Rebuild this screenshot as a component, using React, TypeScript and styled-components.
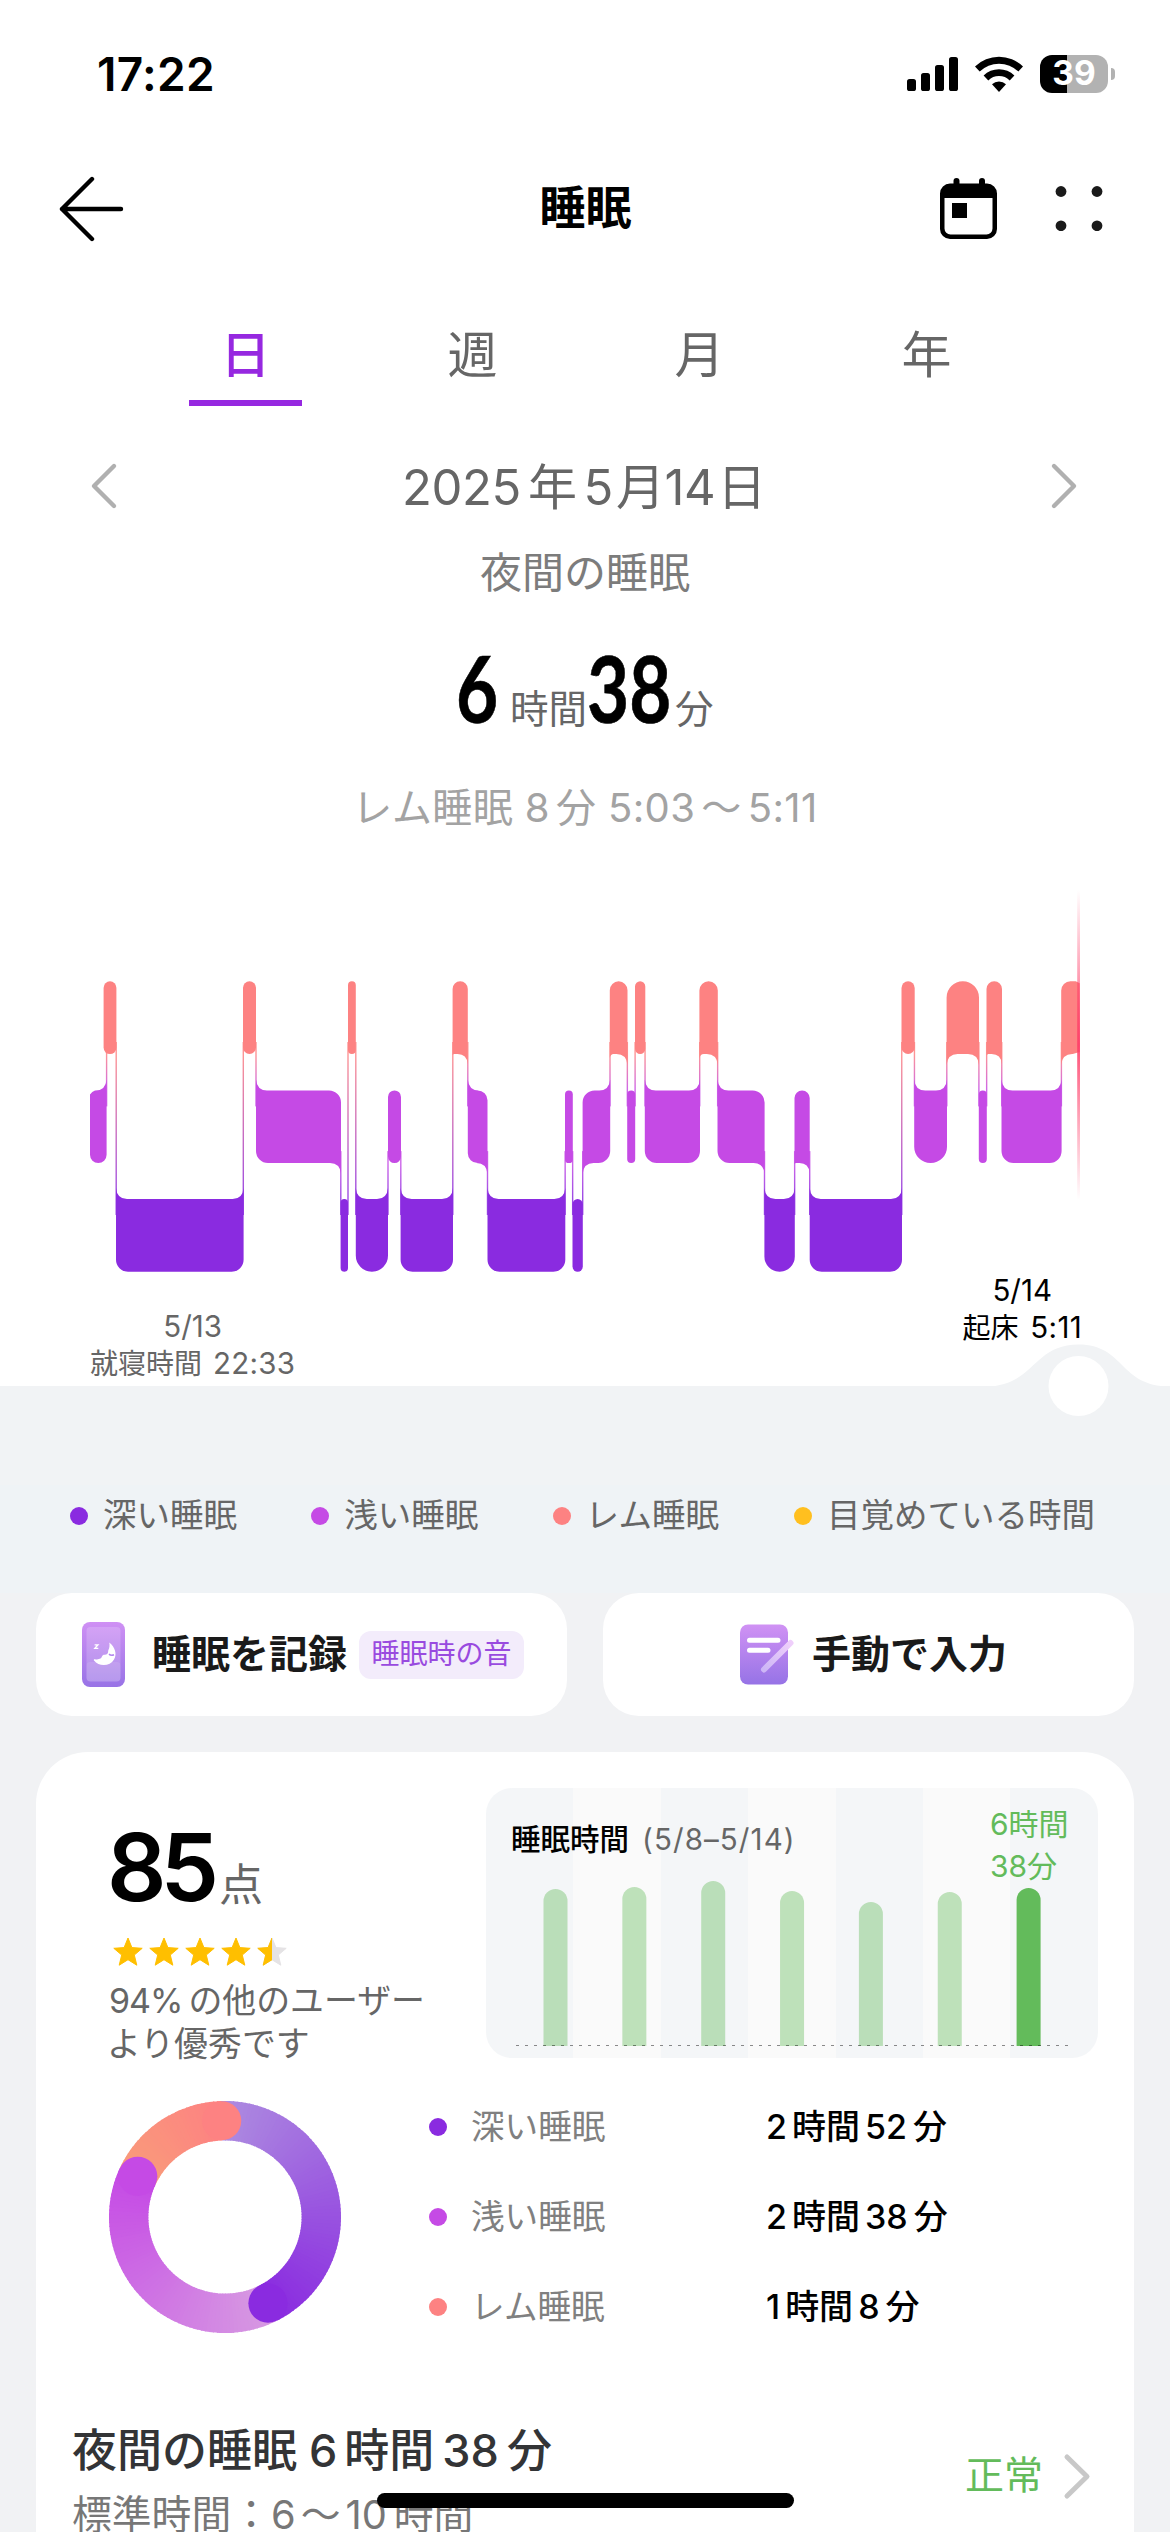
import React from "react";
import styled, { createGlobalStyle } from "styled-components";

const FONT = `Inter, "Noto Sans CJK JP", "Noto Sans", sans-serif`;
const DEEP = "#8a2be0";
const LIGHT = "#c54ae5";
const REM = "#fd8282";
const AWAKE = "#ffbf1f";
const GREEN = "#63bb5b";

const Global = createGlobalStyle`
  *, *::before, *::after { box-sizing: border-box; }
  html, body { margin: 0; padding: 0; background: #f1f2f4; }
  body { font-family: ${FONT}; -webkit-font-smoothing: antialiased; }
  svg { display: block; flex: none; }
`;

const Screen = styled.div`
  position: relative;
  width: 1170px;
  height: 2532px;
  overflow: hidden;
  display: flex;
  flex-direction: column;
  background: #f1f2f4;
`;

const Top = styled.section`
  height: 1386px;
  flex: none;
  display: flex;
  flex-direction: column;
  background: #fff;
`;

/* A line of text with an exact box height; letter-spacing tunes its width. */
const Text = styled.span<{ $size: number; $color?: string; $weight?: number; $line?: number; $track?: number; $ml?: number }>`
  display: block;
  flex: none;
  white-space: nowrap;
  margin-left: ${(p) => p.$ml ?? 0}px;
  font-size: ${(p) => p.$size}px;
  line-height: ${(p) => p.$line ?? p.$size * 1.3}px;
  font-weight: ${(p) => p.$weight ?? 400};
  letter-spacing: ${(p) => p.$track ?? 0}px;
  color: ${(p) => p.$color ?? "#000"};
`;

/* An inline run inside a Text with its own side gaps and size. */
const Num = styled.span<{ $l?: number; $r?: number; $size?: number; $track?: number }>`
  margin-left: ${(p) => p.$l ?? 0}px;
  margin-right: ${(p) => p.$r ?? 0}px;
  ${(p) => (p.$size ? `font-size: ${p.$size}px;` : "")}
  ${(p) => (p.$track !== undefined ? `letter-spacing: ${p.$track}px;` : "")}
`;

/* ---------- status bar ---------- */
const StatusBar = styled.div`
  height: 148px;
  flex: none;
  display: flex;
  justify-content: space-between;
  align-items: center;
  padding: 0 55px 0 97px;
`;
const Clock = styled.div`
  padding-top: 2px;
`;
const StatusIcons = styled.div`
  display: flex;
  align-items: center;
  gap: 17px;
`;
const Battery = styled.div`
  display: flex;
  align-items: center;
  gap: 3px;
`;
const BatteryBody = styled.div`
  width: 68px;
  height: 38px;
  border-radius: 12px;
  background: linear-gradient(90deg, #000 27px, #b2b2b2 27px);
  display: flex;
  justify-content: center;
  align-items: center;
`;
const BatteryTip = styled.div`
  width: 4px;
  height: 12px;
  border-radius: 0 6px 6px 0;
  background: #b2b2b2;
`;

/* ---------- header ---------- */
const Header = styled.header`
  height: 120px;
  flex: none;
  display: grid;
  grid-template-columns: 300px 1fr 300px;
  align-items: center;
  padding: 0 67px 0 58px;
`;
const HeaderTitle = styled.div`
  display: flex;
  justify-content: center;
  margin-left: 10px;
`;
const HeaderActions = styled.div`
  display: flex;
  justify-content: flex-end;
  align-items: center;
  gap: 58px;
`;

/* ---------- tabs ---------- */
const Tabs = styled.nav`
  height: 138px;
  flex: none;
  display: flex;
  padding: 52px 0 0 132px;
`;
const Tab = styled.div<{ $active?: boolean }>`
  width: 227px;
  height: 86px;
  display: flex;
  flex-direction: column;
  align-items: center;
  color: ${(p) => (p.$active ? "#9628e0" : "#666")};
  font-size: 50px;
  font-weight: ${(p) => (p.$active ? 500 : 400)};
  line-height: 70px;
  &::after {
    content: "";
    width: 113px;
    height: 6px;
    margin-top: 10px;
    background: ${(p) => (p.$active ? "#9628e0" : "transparent")};
  }
`;

const DateRow = styled.div`
  height: 105px;
  padding: 24px 92px 0 90px;
  flex: none;
  display: flex;
  justify-content: space-between;
  align-items: flex-start;
  margin-top: 32px;
`;
const Centered = styled.div<{ $h: number }>`
  height: ${(p) => p.$h}px;
  flex: none;
  display: flex;
  justify-content: center;
  align-items: center;
`;
const BigRow = styled.div`
  height: 162px;
  flex: none;
  display: flex;
  align-items: baseline;
  padding: 35px 0 0 456px;
`;
const BigDigits = styled.span<{ $w: number }>`
  display: block;
  width: ${(p) => p.$w}px;
  font-family: Lato, Inter, sans-serif;
  font-size: 92px;
  line-height: 100px;
  font-weight: 700;
  -webkit-text-stroke: 0.6px #000;
  transform: scaleX(0.79);
  transform-origin: 0 0;
`;

/* ---------- night chart ---------- */
const ChartArea = styled.div`
  height: 424px;
  padding-top: 29px;
  flex: none;
`;
const ChartLabels = styled.div`
  height: 111px;
  flex: none;
  display: flex;
  justify-content: space-between;
  align-items: flex-start;
  padding: 0 88px 0 90px;
`;
const ChartLabel = styled.div<{ $top: number }>`
  margin-top: ${(p) => p.$top}px;
  display: flex;
  flex-direction: column;
  align-items: center;
`;

const Legend = styled.div`
  position: relative;
  height: 207px;
  flex: none;
  background: linear-gradient(#f1f3f5 99px, #eff3f6 99px);
  padding: 108px 0 0 70px;
  display: flex;
`;
const Bump = styled.div`
  position: absolute;
  left: 985px;
  top: -43px;
`;
const LegendItem = styled.div`
  width: 241.3px;
  height: 44px;
  display: flex;
  align-items: center;
  gap: 15px;
`;
const Dot = styled.i<{ $c: string }>`
  width: 18px;
  height: 18px;
  flex: none;
  border-radius: 50%;
  background: ${(p) => p.$c};
`;

/* ---------- actions ---------- */
const Actions = styled.div`
  flex: none;
  display: grid;
  grid-template-columns: 1fr 1fr;
  gap: 36px;
  padding: 0 36px;
`;
const Action = styled.button<{ $left: number }>`
  height: 123px;
  border: 0;
  border-radius: 36px;
  background: #fff;
  display: flex;
  align-items: center;
  font-family: inherit;
  padding: 0 0 0 ${(p) => p.$left}px;
`;
const Tag = styled.span`
  height: 48px;
  width: 165px;
  margin-left: 12px;
  border-radius: 12px;
  background: #f3ecfb;
  display: flex;
  align-items: center;
  justify-content: center;
`;

/* ---------- summary card ---------- */
const Card = styled.section`
  margin: 36px 36px 0;
  height: 780px;
  flex: none;
  border-radius: 52px 52px 0 0;
  background: #fff;
  display: flex;
  flex-direction: column;
`;
const CardTop = styled.div`
  height: 306px;
  flex: none;
  display: flex;
  justify-content: space-between;
  padding: 36px 36px 0 73px;
`;
const Score = styled.div`
  display: flex;
  flex-direction: column;
`;
const ScoreLine = styled.div`
  height: 138px;
  flex: none;
  padding-top: 23px;
  display: flex;
  align-items: baseline;
  gap: 4px;
`;
const Stars = styled.div`
  height: 54px;
  flex: none;
  padding: 11px 0 0 3.5px;
  display: flex;
  gap: 6px;
`;
const Mini = styled.div`
  width: 612px;
  height: 270px;
  border-radius: 26px;
  overflow: hidden;
  display: flex;
  flex-direction: column;
  background: repeating-linear-gradient(90deg, #f4f6f8 0 87.4px, #fafafa 87.4px 174.8px);
`;
const MiniHead = styled.div`
  height: 93px;
  flex: none;
  display: flex;
  justify-content: space-between;
  padding: 0 30px 0 25px;
`;
const MiniTitle = styled.div`
  display: flex;
  gap: 13px;
  padding-top: 31px;
`;
const MiniValue = styled.div`
  padding-top: 15px;
  width: 78px;
`;

const Breakdown = styled.div`
  height: 318px;
  flex: none;
  display: flex;
  padding: 43px 0 0 73px;
`;
const Rows = styled.div`
  margin: 4px 0 0 88px;
  display: flex;
  flex-direction: column;
  gap: 46px;
`;
const Row = styled.div`
  height: 44px;
  display: grid;
  grid-template-columns: 18px 319px auto;
  align-items: center;
`;
const RowName = styled.div`
  padding-left: 24px;
`;

const Detail = styled.div`
  flex: 1;
  display: flex;
  justify-content: space-between;
  padding: 0 43px 0 36px;
`;
const DetailText = styled.div`
  padding-top: 44px;
`;
const DetailStatus = styled.div`
  display: flex;
  align-items: flex-start;
  gap: 20px;
  padding-top: 77px;
`;
const HomeBar = styled.div`
  position: absolute;
  left: 377px;
  top: 2493px;
  width: 417px;
  height: 15px;
  border-radius: 8px;
  background: #000;
`;

/* ---------- icons ---------- */
const SignalIcon = () => (
  <svg width="51" height="34" viewBox="0 0 51 34">
    <rect x="0" y="22" width="9" height="12" rx="2.6" />
    <rect x="14" y="16" width="9" height="18" rx="2.6" />
    <rect x="28" y="8" width="9" height="26" rx="2.6" />
    <rect x="42" y="0" width="9" height="34" rx="2.6" />
  </svg>
);
const WifiIcon = () => (
  <svg width="48" height="36" viewBox="0 0 48 36">
    <path d="M0 10.4A34.6 34.6 0 0 1 48 10.4L43.3 15.6A27.4 27.4 0 0 0 4.7 15.6Z" />
    <path d="M8.6 19.5A22 22 0 0 1 39.4 19.5L34.7 24.5A15 15 0 0 0 13.3 24.5Z" />
    <path d="M17 28.3A10 10 0 0 1 31 28.3L24 36Z" />
  </svg>
);
const BackIcon = () => (
  <svg width="68" height="68" viewBox="0 0 68 68" fill="none" stroke="#000" strokeWidth="4.4" strokeLinecap="round" strokeLinejoin="round">
    <path d="M34 5L4 35L34 65M4 35H63" />
  </svg>
);
const CalendarIcon = () => (
  <svg width="57" height="61" viewBox="0 0 57 61">
    <path fillRule="evenodd" d="M10 5.5H47A10 10 0 0 1 57 15.5V51A10 10 0 0 1 47 61H10A10 10 0 0 1 0 51V15.5A10 10 0 0 1 10 5.5ZM4.5 20V50.5A6 6 0 0 0 10.5 56.5H46.5A6 6 0 0 0 52.5 50.5V20Z" />
    <rect x="13.5" y="0" width="6" height="12" rx="3" />
    <rect x="39" y="0" width="6" height="12" rx="3" />
    <rect x="12" y="25" width="15" height="15" />
  </svg>
);
const MoreIcon = () => (
  <svg width="48" height="46" viewBox="0 0 48 46" fill="#1a1a1a">
    {[[6, 6.5], [42, 6.5], [6, 40.8], [42, 40.8]].map(([x, y]) => (
      <circle key={`${x}-${y}`} cx={x} cy={y} r="5.4" />
    ))}
  </svg>
);
const Chevron = ({ dir, color, w = 24, h = 44, sw = 4.4 }: { dir: "l" | "r"; color: string; w?: number; h?: number; sw?: number }) => (
  <svg width={w + 4} height={h + 4} viewBox={`-2 -2 ${w + 4} ${h + 4}`} fill="none" stroke={color} strokeWidth={sw} strokeLinecap="round" strokeLinejoin="round">
    <path d={dir === "l" ? `M${w - 2} 2L2 ${h / 2}L${w - 2} ${h - 2}` : `M2 2L${w - 2} ${h / 2}L2 ${h - 2}`} />
  </svg>
);
const PhoneIcon = () => (
  <svg width="43" height="65" viewBox="0 0 43 65">
    <defs>
      <linearGradient id="phone" x1="0" y1="0" x2="0" y2="1">
        <stop offset="0" stopColor="#cf90f4" />
        <stop offset="1" stopColor="#9873e6" />
      </linearGradient>
    </defs>
    <rect width="43" height="65" rx="8" fill="url(#phone)" />
    <rect x="4.5" y="5" width="34" height="54.5" rx="4" fill="#fff" opacity=".18" />
    <rect x="4.5" y="40" width="34" height="19.5" rx="4" fill="#fff" opacity=".1" />
    <path d="M27.3 20.5C33 25 35.4 32 32 37.5C28 44.5 17 45 12 38.5C11.4 37.7 12 37 13 37.2C15 37.6 17 37.4 18.5 36.6C20 35.7 19.6 34.6 20.6 33.6C22 32 23.8 33.2 25.2 32C26.8 30.5 25.6 29.5 26.6 27.6C27.5 25.8 27.8 23.5 27.3 20.5Z" fill="#fff" />
    <path d="M27 32.2Q29 34 32 32.8" fill="none" stroke="#b386ee" strokeWidth="1.6" />
    <path d="M12.6 22.8H16L12.8 26.4H16.3" fill="none" stroke="#fff" strokeWidth="1.3" />
  </svg>
);
const NoteIcon = () => (
  <svg width="54" height="61" viewBox="0 0 54 61">
    <defs>
      <linearGradient id="note" x1="0" y1="0" x2="0" y2="1">
        <stop offset="0" stopColor="#d092f4" />
        <stop offset="1" stopColor="#9673e6" />
      </linearGradient>
      <linearGradient id="pen" x1="1" y1="0" x2="0" y2="1">
        <stop offset="0" stopColor="#efcffb" />
        <stop offset="1" stopColor="#cdb6f6" />
      </linearGradient>
    </defs>
    <rect x="0" y=".5" width="48" height="60" rx="8" fill="url(#note)" />
    <path d="M9.5 16.2H38M9.5 26.3H28" stroke="#fff" strokeWidth="5" strokeLinecap="round" />
    <path d="M50.5 19L24 45.5" stroke="url(#pen)" strokeWidth="6" strokeLinecap="round" />
  </svg>
);
const STAR = "M15 1L18.9 10.6L29.2 11.3L21.3 18L23.8 28.2L15 22.7L6.2 28.2L8.7 18L.8 11.3L11.1 10.6Z";
const Star = ({ half }: { half?: boolean }) => (
  <svg width="30" height="30" viewBox="0 0 30 30">
    <path d={STAR} fill={half ? "#e5e3e5" : "#ffbf00"} stroke={half ? "#e5e3e5" : "#ffbf00"} strokeLinejoin="round" />
    {half && (
      <>
        <clipPath id="half"><rect width="15" height="30" /></clipPath>
        <path d={STAR} fill="#ffbf00" stroke="#ffbf00" strokeLinejoin="round" clipPath="url(#half)" />
      </>
    )}
  </svg>
);

/* ---------- hypnogram ---------- */
type Stage = "R" | "L" | "D";
const TOP: Record<Stage, number> = { R: 101.3, L: 210.4, D: 319 };
const BAR_H = 72.7;
const COLOR: Record<Stage, string> = { R: REM, L: LIGHT, D: DEEP };
const RANK: Record<Stage, number> = { R: 0, L: 1, D: 2 };
const SEGMENTS: [Stage, number, number][] = [
  ["L", 90, 106.6], ["R", 103.6, 116.4], ["D", 116, 243.6], ["R", 243, 256], ["L", 256, 341],
  ["D", 340.6, 348], ["R", 348, 355.8], ["D", 355.8, 388], ["L", 388, 401], ["D", 400.6, 453],
  ["R", 452.6, 467.8], ["L", 467.8, 487.5], ["D", 487.5, 565.3], ["L", 565, 572.8], ["D", 572.5, 582.8],
  ["L", 582.6, 610.2], ["R", 609.8, 627.5], ["L", 627.2, 635.2], ["R", 635, 645.3], ["L", 644.8, 700],
  ["R", 699.4, 717.8], ["L", 717.5, 764.6], ["D", 764.4, 794.8], ["L", 794.5, 809.7], ["D", 809.7, 902],
  ["R", 901.5, 914.7], ["L", 914.2, 947], ["R", 946.6, 979], ["L", 978.8, 986.8], ["R", 986.5, 1002],
  ["L", 1001.5, 1061.6], ["R", 1061.2, 1079.7],
];

function barPath(i: number): string {
  const [stage, x0, x1] = SEGMENTS[i];
  const w = x1 - x0;
  const t = TOP[stage];
  const b = t + BAR_H;
  const prev = SEGMENTS[i - 1]?.[0];
  const next = SEGMENTS[i + 1]?.[0];
  const up = (s?: Stage) => s !== undefined && RANK[s] < RANK[stage];
  const down = (s?: Stage) => s !== undefined && RANK[s] > RANK[stage];
  const wide = w > 14;
  const same = up(prev) === up(next);
  const r = w < 35 && same ? w / 2 : Math.min(12, w / 2);
  const fr = wide ? Math.min(11, w / 1.5) : 0;
  const fl = wide ? (same ? Math.max(0, Math.min(11, w - 14)) : fr) : 0;
  const last = i === SEGMENTS.length - 1;
  const first = i === 0;
  const s: string[] = [];
  // top-left
  if (wide && up(prev)) s.push(`M${x0} ${t - fl}Q${x0 + 1} ${t} ${x0 + fl} ${t}`);
  else if (first) s.push(`M${x0} ${t + 4}Q${x0 + 2} ${t + 1} ${x0 + 5} ${t}`);
  else s.push(`M${x0} ${t + r}A${r} ${r} 0 0 1 ${x0 + r} ${t}`);
  // top-right
  if (wide && up(next)) s.push(`L${x1 - fr} ${t}Q${x1 - 1} ${t} ${x1} ${t - fr}`);
  else if (last) s.push(`L${x1 - 4} ${t}L${x1} ${t + 2}`);
  else s.push(`L${x1 - r} ${t}A${r} ${r} 0 0 1 ${x1} ${t + r}`);
  // bottom-right
  if (wide && down(next)) s.push(`L${x1} ${b + fr}Q${x1 - 1} ${b} ${x1 - fr} ${b}`);
  else if (last) s.push(`L${x1} ${b - 2}L${x1 - 7} ${b}`);
  else s.push(`L${x1} ${b - r}A${r} ${r} 0 0 1 ${x1 - r} ${b}`);
  // bottom-left
  if (wide && down(prev)) s.push(`L${x0 + (last ? 11 : fl)} ${b}Q${x0 + 1} ${b} ${x0} ${b + (last ? 11 : fl)}`);
  else s.push(`L${x0 + r} ${b}A${r} ${r} 0 0 1 ${x0} ${b - r}`);
  return s.join("") + "Z";
}

const Hypnogram = () => (
  <svg width="1170" height="395" viewBox="0 0 1170 395">
    <defs>
      {([["R", "L"], ["R", "D"], ["L", "D"]] as [Stage, Stage][]).map(([a, b]) => (
        <linearGradient key={a + b} id={`link${a}${b}`} gradientUnits="userSpaceOnUse" x1="0" x2="0" y1={TOP[a] + BAR_H} y2={TOP[b]}>
          <stop offset="0" stopColor={COLOR[a]} />
          <stop offset="1" stopColor={COLOR[b]} />
        </linearGradient>
      ))}
      <linearGradient id="cursor" x1="0" y1="0" x2="0" y2="1">
        <stop offset="0" stopColor="#ff3d68" stopOpacity="0" />
        <stop offset=".5" stopColor="#ff3d68" stopOpacity=".9" />
        <stop offset="1" stopColor="#ff3d68" stopOpacity="0" />
      </linearGradient>
    </defs>
    {SEGMENTS.slice(1).map(([stage, x0], k) => {
      const [ps, , px] = SEGMENTS[k];
      const [a, b] = RANK[ps] < RANK[stage] ? [ps, stage] : [stage, ps];
      const x = k === 0 ? px : (x0 + px) / 2;
      return <rect key={k} x={x - 0.7} width="1.4" y={TOP[a] + BAR_H - 12} height={TOP[b] - TOP[a] - BAR_H + 28} fill={`url(#link${a}${b})`} opacity=".85" />;
    })}
    {SEGMENTS.map(([stage], i) => (
      <path key={i} d={barPath(i)} fill={COLOR[stage]} />
    ))}
    <rect x="1077.2" y="10" width="2.8" height="310" fill="url(#cursor)" />
  </svg>
);

/* ---------- weekly bars ---------- */
const WEEK = [157, 159, 165, 155, 144, 154, 158];
const WeekBars = () => (
  <svg width="612" height="177" viewBox="0 0 612 177">
    {WEEK.map((h, i) => {
      const x = 57.5 + i * 78.85;
      return (
        <path key={i} d={`M${x} 165V${165 - h + 12}a12 12 0 0 1 24 0V165Z`} fill={GREEN} opacity={i === 6 ? 1 : 0.4} />
      );
    })}
    <path d="M30 164.5H583" stroke="#000" strokeOpacity=".45" strokeWidth="1" strokeDasharray="3 6" />
  </svg>
);

/* ---------- stage ring ---------- */
const RING: { from: number; to: number; a: number[]; b: number[] }[] = [
  { from: -2, to: 153.5, a: [173, 139, 224], b: [138, 43, 224] },
  { from: 153.5, to: 295, a: [215, 154, 226], b: [197, 74, 229] },
  { from: 295, to: 358, a: [249, 155, 122], b: [253, 130, 130] },
];
const RADIUS = 96.3;
const at = (deg: number): [number, number] => {
  const t = (deg * Math.PI) / 180;
  return [116 + RADIUS * Math.sin(t), 116 - RADIUS * Math.cos(t)];
};
const Ring = () => (
  <svg width="232" height="232" viewBox="0 0 232 232" fill="none" strokeWidth="39.4">
    {RING.map(({ from, to, a, b }) => {
      const n = Math.round((to - from) / 2);
      return Array.from({ length: n }, (_, k) => {
        const [x0, y0] = at(from + ((to - from) * k) / n);
        const [x1, y1] = at(from + ((to - from) * (k + 1)) / n + (k < n - 1 ? 0.6 : 0));
        const c = a.map((v, j) => Math.round(v + ((b[j] - v) * k) / (n - 1)));
        return <path key={`${from}-${k}`} d={`M${x0} ${y0}A${RADIUS} ${RADIUS} 0 0 1 ${x1} ${y1}`} stroke={`rgb(${c.join(",")})`} />;
      });
    })}
    {RING.map(({ to, b }) => {
      const [x, y] = at(to);
      return <circle key={to} cx={x} cy={y} r="19.6" fill={`rgb(${b.join(",")})`} stroke="none" />;
    })}
  </svg>
);

const legend: [string, string][] = [[DEEP, "深い睡眠"], [LIGHT, "浅い睡眠"], [REM, "レム睡眠"], [AWAKE, "目覚めている時間"]];
const breakdown: [string, string, number, number][] = [
  [DEEP, "深い睡眠", 2, 52],
  [LIGHT, "浅い睡眠", 2, 38],
  [REM, "レム睡眠", 1, 8],
];

export default function App() {
  return (
    <>
      <Global />
      <Screen>
        <Top>
          <StatusBar>
            <Clock><Text $size={46} $weight={600} $track={0.3}>17:22</Text></Clock>
            <StatusIcons>
              <SignalIcon />
              <WifiIcon />
              <Battery>
                <BatteryBody>
                  <Text $size={33.5} $weight={700} $color="#fff">39</Text>
                </BatteryBody>
                <BatteryTip />
              </Battery>
            </StatusIcons>
          </StatusBar>
          <Header>
            <BackIcon />
            <HeaderTitle><Text $size={46} $weight={700}>睡眠</Text></HeaderTitle>
            <HeaderActions>
              <CalendarIcon />
              <MoreIcon />
            </HeaderActions>
          </Header>
          <Tabs>
            <Tab $active>日</Tab>
            <Tab>週</Tab>
            <Tab>月</Tab>
            <Tab>年</Tab>
          </Tabs>
          <DateRow>
            <Chevron dir="l" color="#b0b0b0" />
            <Text $size={49} $line={52} $color="#666" $track={-0.4}>
              2025<Num $l={7} $r={7}>年</Num>5<Num $l={3}>月</Num>14<Num $l={2}>日</Num>
            </Text>
            <Chevron dir="r" color="#b0b0b0" />
          </DateRow>
          <Centered $h={60}><Text $size={42} $color="#7c7c7c">夜間の睡眠</Text></Centered>
          <BigRow>
            <BigDigits $w={54}>6</BigDigits>
            <Text $size={38.5} $color="#666">時間</Text>
            <BigDigits $w={88}>38</BigDigits>
            <Text $size={38.5} $color="#666">分</Text>
          </BigRow>
          <Centered $h={86}>
            <Text $size={40} $color="#a3a3a3" $track={0.4}>
              レム睡眠 8<Num $l={6}>分</Num> 5:03<Num $l={6} $r={6}>〜</Num>5:11
            </Text>
          </Centered>
          <ChartArea><Hypnogram /></ChartArea>
          <ChartLabels>
            <ChartLabel $top={33}>
              <Text $size={29.5} $line={36.5} $color="#666">5/13</Text>
              <Text $size={28} $line={36.5} $color="#666">就寝時間 <Num $size={29.5} $l={3} $track={0.3}>22:33</Num></Text>
            </ChartLabel>
            <ChartLabel $top={-3}>
              <Text $size={29.5} $line={36.5}>5/14</Text>
              <Text $size={28} $line={36.5}>起床 <Num $size={29.5} $l={4} $track={0.3}>5:11</Num></Text>
            </ChartLabel>
          </ChartLabels>
        </Top>

        <Legend>
          <Bump>
            <svg width="185" height="74" viewBox="0 0 185 74">
              <path d="M0 43.5C50 43.5 47 1.5 93.5 1.5C140 1.5 134 43.5 185 43.5Z" fill="#f1f3f5" />
              <circle cx="93.5" cy="43" r="30" fill="#fff" />
            </svg>
          </Bump>
          {legend.map(([c, name]) => (
            <LegendItem key={name}>
              <Dot $c={c} />
              <Text $size={33.5} $color="#666">{name}</Text>
            </LegendItem>
          ))}
        </Legend>

        <Actions>
          <Action $left={46}>
            <PhoneIcon />
            <Text $size={39} $weight={700} $color="#1a1a1a" $ml={27}>睡眠を記録</Text>
            <Tag><Text $size={28} $color="#994adf">睡眠時の音</Text></Tag>
          </Action>
          <Action $left={137}>
            <NoteIcon />
            <Text $size={39} $weight={700} $color="#1a1a1a" $ml={18}>手動で入力</Text>
          </Action>
        </Actions>

        <Card>
          <CardTop>
            <Score>
              <ScoreLine>
                <Text $size={93} $weight={600} $line={112} $track={-6} $ml={-2}>85</Text>
                <Text $size={44} $color="#666" $ml={2}>点</Text>
              </ScoreLine>
              <Stars>
                <Star /><Star /><Star /><Star /><Star half />
              </Stars>
              <Text $size={33.9} $line={42.5} $color="#666">
                <Num $size={34} $track={-1}>94%</Num><Num $l={6}>の他のユーザー</Num>
              </Text>
              <Text $size={33.9} $line={42.5} $color="#666" $ml={-2}>より優秀です</Text>
            </Score>
            <Mini>
              <MiniHead>
                <MiniTitle>
                  <Text $size={29.5} $line={40} $weight={500}>睡眠時間</Text>
                  <Text $size={29.5} $line={40} $color="#666" $track={1.1}>(5/8–5/14)</Text>
                </MiniTitle>
                <MiniValue>
                  <Text $size={30} $line={42} $color={GREEN}>6時間</Text>
                  <Text $size={30} $line={42} $color={GREEN}>38分</Text>
                </MiniValue>
              </MiniHead>
              <WeekBars />
            </Mini>
          </CardTop>

          <Breakdown>
            <Ring />
            <Rows>
              {breakdown.map(([c, name, h, m]) => (
                <Row key={name}>
                  <Dot $c={c} />
                  <RowName><Text $size={33.6} $color="#808080">{name}</Text></RowName>
                  <Text $size={34} $weight={500}>{h}<Num $l={5} $r={5}>時間</Num>{m}<Num $l={6}>分</Num></Text>
                </Row>
              ))}
            </Rows>
          </Breakdown>

          <Detail>
            <DetailText>
              <Text $size={45} $line={62} $weight={500} $color="#333436">
                夜間の睡眠 6<Num $l={7} $r={8}>時間</Num>38<Num $l={8}>分</Num>
              </Text>
              <Text $size={39.8} $line={66} $color="#777">
                標準時間：6<Num $l={5} $r={5}>〜</Num>10<Num $l={7}>時間</Num>
              </Text>
            </DetailText>
            <DetailStatus>
              <Text $size={39} $line={44} $color={GREEN}>正常</Text>
              <Chevron dir="r" color="#c8c8c8" w={24} h={43} sw={5} />
            </DetailStatus>
          </Detail>
        </Card>
        <HomeBar />
      </Screen>
    </>
  );
}
